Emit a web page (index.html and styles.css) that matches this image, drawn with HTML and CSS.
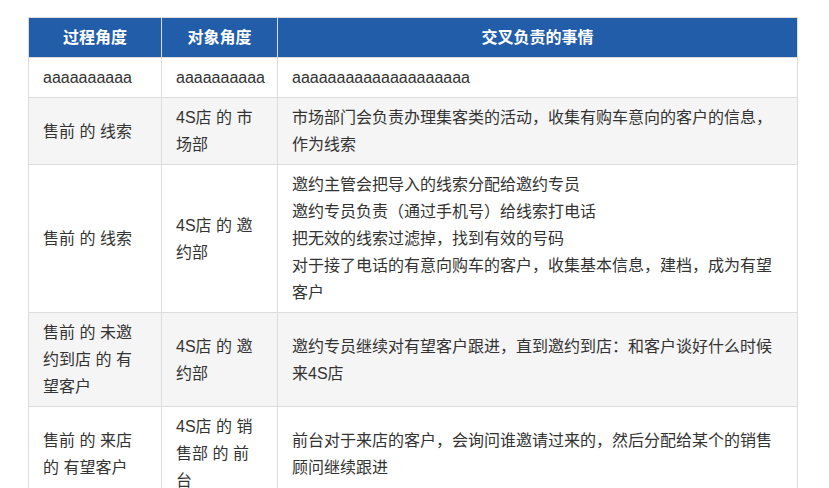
FILE: index.html
```html
<!DOCTYPE html>
<html lang="zh">
<head>
<meta charset="utf-8">
<title>表格</title>
<link rel="stylesheet" href="styles.css">
</head>
<body>
<div class="page">
  <table class="grid">
    <colgroup>
      <col class="c1">
      <col class="c2">
      <col class="c3">
    </colgroup>
    <thead>
      <tr>
        <th>过程角度</th>
        <th>对象角度</th>
        <th>交叉负责的事情</th>
      </tr>
    </thead>
    <tbody>
      <tr>
        <td>aaaaaaaaaa</td>
        <td>aaaaaaaaaa</td>
        <td>aaaaaaaaaaaaaaaaaaaa</td>
      </tr>
      <tr>
        <td>售前 的 线索</td>
        <td>4S店 的 市场部</td>
        <td>市场部门会负责办理集客类的活动，收集有购车意向的客户的信息，作为线索</td>
      </tr>
      <tr>
        <td>售前 的 线索</td>
        <td>4S店 的 邀约部</td>
        <td>邀约主管会把导入的线索分配给邀约专员<br>邀约专员负责（通过手机号）给线索打电话<br>把无效的线索过滤掉，找到有效的号码<br>对于接了电话的有意向购车的客户，收集基本信息，建档，成为有望客户</td>
      </tr>
      <tr>
        <td>售前 的 未邀约到店 的 有望客户</td>
        <td>4S店 的 邀约部</td>
        <td>邀约专员继续对有望客户跟进，直到邀约到店：和客户谈好什么时候来4S店</td>
      </tr>
      <tr>
        <td>售前 的 来店 的 有望客户</td>
        <td>4S店 的 销售部 的 前台</td>
        <td>前台对于来店的客户，会询问谁邀请过来的，然后分配给某个的销售顾问继续跟进</td>
      </tr>
    </tbody>
  </table>
</div>
</body>
</html>
```

FILE: styles.css
```css
html, body {
  margin: 0;
  padding: 0;
  background: #ffffff;
}

.page {
  padding: 17px 0 0 28px;
  font-family: "Liberation Sans", "Noto Sans CJK SC", sans-serif;
  font-size: 16px;
  color: #333333;
}

.grid {
  border-collapse: collapse;
  table-layout: fixed;
  width: 769px;
}

.c1 { width: 133px; }
.c2 { width: 116px; }
.c3 { width: 520px; }

.grid th,
.grid td {
  border: 1px solid #dcdcdc;
  padding: 6px 14px;
  line-height: 27px;
  vertical-align: middle;
  text-align: left;
}

.grid th {
  background: #215da9;
  color: #ffffff;
  font-weight: bold;
  text-align: center;
}

.grid tbody tr:nth-child(even) td {
  background: #f5f5f5;
}
```
